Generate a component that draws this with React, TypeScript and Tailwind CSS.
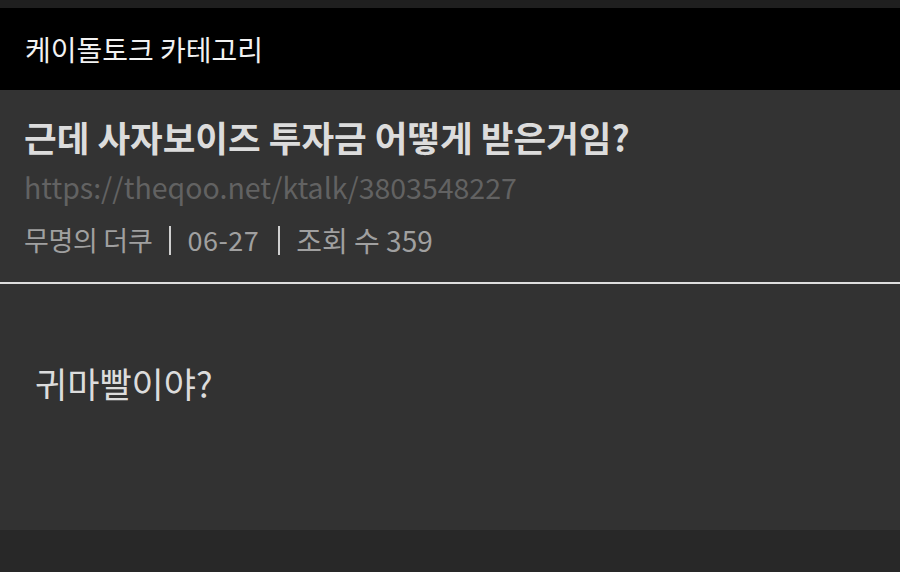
export default function App() {
  const font = { fontFamily: '"Noto Sans CJK KR", "Noto Sans", sans-serif' }
  return (
    <div className="w-[900px] h-[572px] flex flex-col bg-[#282828]" style={font}>
      <div className="h-[8px] bg-[#1f1f1f]" />
      <div className="h-[82px] bg-black flex items-center px-[25px]">
        <h1 className="text-[28px] text-[#f2f2f2]">케이돌토크 카테고리</h1>
      </div>
      <div className="h-[192px] bg-[#333333] px-[24px] pt-[23px]">
        <h2 className="text-[35.5px] font-bold text-[#dcdcdc] leading-[48px]">근데 사자보이즈 투자금 어떻게 받은거임?</h2>
        <p className="text-[28.5px] text-[#626262] leading-[52px]">https://theqoo.net/ktalk/3803548227</p>
        <p className="text-[27px] text-[#a0a0a0] leading-[54px] flex items-center">
          <span className="tracking-[-0.3px]">무명의 더쿠</span>
          <span className="ml-[17px] mr-[16px] inline-block w-[2px] h-[29px] bg-[#d0d0d0]" />
          <span className="tracking-[0.5px]">06-27</span>
          <span className="ml-[19px] mr-[16px] inline-block w-[2px] h-[29px] bg-[#d0d0d0]" />
          <span className="text-[28px]">조회 수 359</span>
        </p>
      </div>
      <div className="h-[2px] bg-[#dedede]" />
      <div className="h-[246px] bg-[#323232] px-[35px] pt-[77px]">
        <p className="text-[35px] text-[#dcdcdc] leading-[44px]">귀마빨이야?</p>
      </div>
      <div className="flex-1 bg-[#282828]" />
    </div>
  )
}
